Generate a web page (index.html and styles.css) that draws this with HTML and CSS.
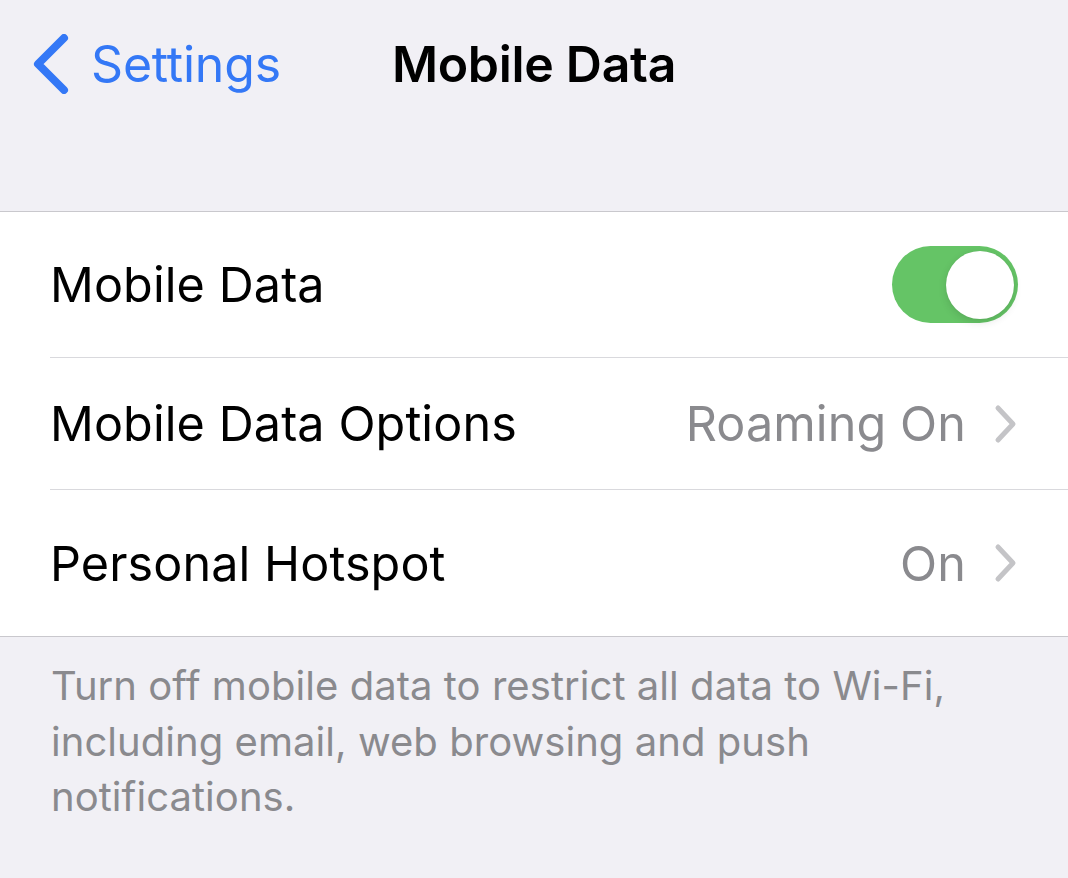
FILE: index.html
```html
<!DOCTYPE html>
<html>
<head>
<meta charset="utf-8">
<link rel="stylesheet" href="styles.css">
</head>
<body>
<div class="screen">
  <header class="nav">
    <a class="back">
      <svg class="back-icon" width="36" height="60" viewBox="0 0 36 60"><path d="M31 4 L5 30 L31 56" fill="none" stroke="#3478f6" stroke-width="8" stroke-linecap="round" stroke-linejoin="round"/></svg>
      <span class="back-label">Settings</span>
    </a>
    <h1 class="title">Mobile Data</h1>
  </header>

  <section class="group">
    <div class="row row-1">
      <div class="row-inner">
        <span class="label">Mobile Data</span>
        <span class="toggle"><span class="knob"></span></span>
      </div>
    </div>
    <div class="row row-2">
      <div class="row-inner">
        <span class="label">Mobile Data Options</span>
        <span class="detail">Roaming On
          <svg class="chev" width="24" height="40" viewBox="0 0 24 40"><path d="M4 4 L19 20 L4 36" fill="none" stroke="#c4c4c7" stroke-width="5" stroke-linecap="round" stroke-linejoin="round"/></svg>
        </span>
      </div>
    </div>
    <div class="row row-3">
      <div class="row-inner">
        <span class="label">Personal Hotspot</span>
        <span class="detail">On
          <svg class="chev" width="24" height="40" viewBox="0 0 24 40"><path d="M4 4 L19 20 L4 36" fill="none" stroke="#c4c4c7" stroke-width="5" stroke-linecap="round" stroke-linejoin="round"/></svg>
        </span>
      </div>
    </div>
  </section>

  <p class="footer">Turn off mobile data to restrict all data to Wi-Fi, including email, web browsing and push notifications.</p>
</div>
</body>
</html>
```
FILE: styles.css
```css
html, body {
  margin: 0;
  padding: 0;
  background: #f1f0f5;
}
body {
  font-family: Inter, "Noto Sans", "Liberation Sans", sans-serif;
  width: 1068px;
  height: 878px;
  overflow: hidden;
}
.screen {
  display: flex;
  flex-direction: column;
}
.nav {
  position: relative;
  height: 211px;
  display: flex;
  align-items: flex-start;
}
.back {
  display: flex;
  align-items: center;
  gap: 22px;
  padding: 34px 0 0 33px;
  color: #3478f6;
}
.back-icon {
  display: block;
}
.back-label {
  font-size: 50px;
  line-height: 60px;
  letter-spacing: -0.2px;
}
.title {
  position: absolute;
  left: 0;
  right: 0;
  top: 34px;
  margin: 0;
  text-align: center;
  font-size: 50px;
  line-height: 60px;
  font-weight: 600;
  color: #000;
  letter-spacing: -0.3px;
}
.group {
  background: #fff;
  border-top: 1px solid #c9c8cd;
  border-bottom: 1px solid #c9c8cd;
}
.row {
  padding-left: 50px;
}
.row-inner {
  display: flex;
  align-items: center;
  justify-content: space-between;
  padding-right: 50px;
  border-bottom: 1px solid #d9d9dd;
}
.row-1 .row-inner { height: 145px; }
.row-2 .row-inner { height: 131px; }
.row-3 .row-inner { height: 146px; border-bottom: none; }
.label {
  font-size: 48.5px;
  color: #000;
  letter-spacing: 0.1px;
}
.detail {
  display: flex;
  align-items: center;
  gap: 28px;
  font-size: 48.5px;
  color: #8a8a8e;
  letter-spacing: 0.1px;
}
.chev {
  display: block;
}
.toggle {
  width: 126px;
  height: 77px;
  border-radius: 39px;
  background: #65c466;
  display: flex;
  align-items: center;
  justify-content: flex-end;
  padding-right: 4px;
  box-sizing: border-box;
}
.knob {
  width: 68px;
  height: 68px;
  border-radius: 50%;
  background: #fff;
  box-shadow: 0 3px 8px rgba(0,0,0,0.12), 0 0 1px rgba(0,0,0,0.1);
}
.footer {
  margin: 0;
  padding: 21px 80px 0 51px;
  font-size: 40px;
  line-height: 55.5px;
  color: #8a8a8e;
  letter-spacing: 0.05px;
}
```
